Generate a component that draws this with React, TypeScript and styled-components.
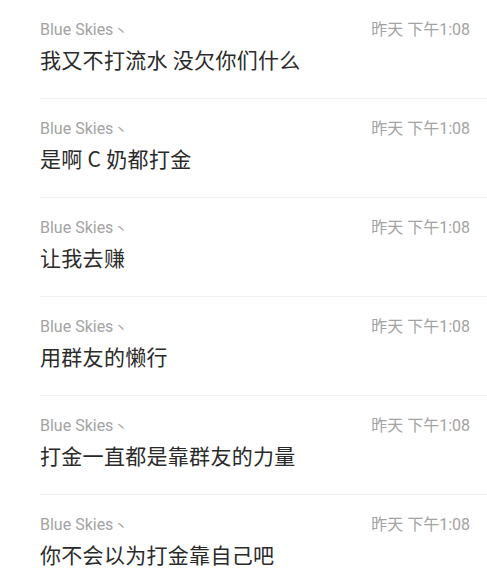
import styled, { createGlobalStyle } from 'styled-components';

const GlobalStyle = createGlobalStyle`
  html, body {
    margin: 0;
    padding: 0;
    background: #ffffff;
  }
  body {
    font-family: Roboto, "Noto Sans CJK SC", sans-serif;
  }
`;

const List = styled.div`
  display: flex;
  flex-direction: column;
  width: 487px;
`;

const Item = styled.div`
  margin-left: 40px;
  padding: 20px 17px 25px 0;
  border-bottom: 1px solid #f1f1f1;
  display: flex;
  flex-direction: column;
  gap: 4px;

  &:last-child {
    border-bottom: none;
  }
`;

const Header = styled.div`
  display: flex;
  justify-content: space-between;
  align-items: baseline;
  font-family: Roboto, "Noto Sans CJK SC", sans-serif;
  font-size: 16px;
  line-height: 20px;
  color: #a3a3a3;
`;

const Mark = styled.span`
  font-size: 13px;
  margin-left: 1px;
`;

const Message = styled.div`
  font-family: "Noto Sans CJK SC", Roboto, sans-serif;
  font-size: 21px;
  line-height: 28px;
  letter-spacing: 0.3px;
  color: #2a2a2a;
`;

const messages = [
  '我又不打流水 没欠你们什么',
  '是啊 C 奶都打金',
  '让我去赚',
  '用群友的懒行',
  '打金一直都是靠群友的力量',
  '你不会以为打金靠自己吧',
];

export default function App() {
  return (
    <>
      <GlobalStyle />
      <List>
        {messages.map((text, i) => (
          <Item key={i}>
            <Header>
              <span>
                Blue Skies<Mark>丶</Mark>
              </span>
              <span>昨天 下午1:08</span>
            </Header>
            <Message>{text}</Message>
          </Item>
        ))}
      </List>
    </>
  );
}
